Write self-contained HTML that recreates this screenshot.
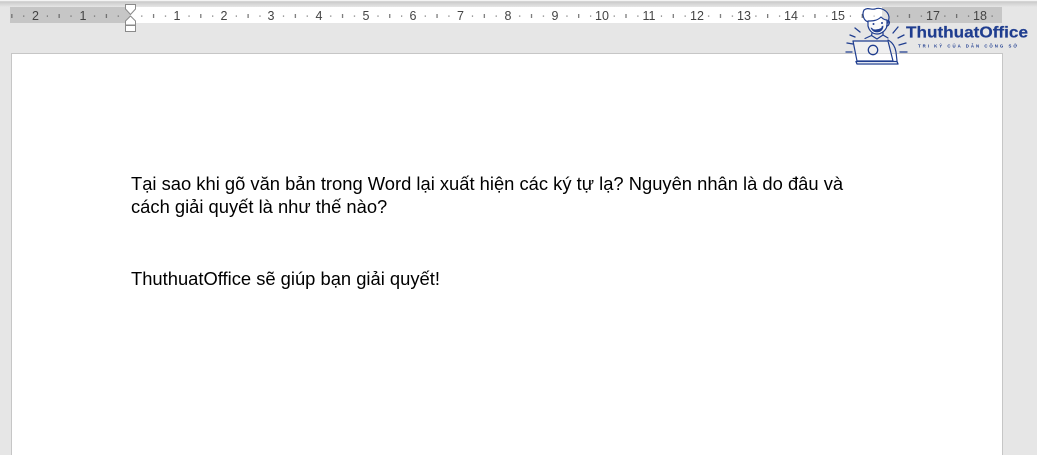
<!DOCTYPE html>
<html lang="vi">
<head>
<meta charset="utf-8">
<title>ThuthuatOffice</title>
<style>
html,body{margin:0;padding:0;background:#e6e6e6;width:1037px;height:455px;overflow:hidden;}
body{position:relative;font-family:"Liberation Sans",sans-serif;}
#top{position:absolute;left:0;top:0;width:1037px;height:7px;background:linear-gradient(#f4f4f4 0,#f4f4f4 1px,#c9c9c9 1.5px,#d6d6d6 4px,#e6e6e6 7px);}
#page{position:absolute;left:11px;top:53px;width:990px;height:401px;background:#fff;border:1px solid #c6c6c6;border-bottom:0;}
.t{position:absolute;left:131px;font-size:18.36px;line-height:23px;color:#000;white-space:nowrap;}
svg{position:absolute;left:0;top:0;}
</style>
</head>
<body>
<div id="top"></div>
<div id="page"></div>
<div class="t" style="top:172px">Tại sao khi gõ văn bản trong Word lại xuất hiện các ký tự lạ? Nguyên nhân là do đâu và</div>
<div class="t" style="top:195px">cách giải quyết là như thế nào?</div>
<div class="t" style="top:267px">ThuthuatOffice sẽ giúp bạn giải quyết!</div>

<svg width="1037" height="455" viewBox="0 0 1037 455" xmlns="http://www.w3.org/2000/svg">
<defs>
<pattern id="tk" x="130" y="7" width="47.24" height="16" patternUnits="userSpaceOnUse">
<rect x="11.3" y="8.5" width="1" height="1.2" fill="#555"/>
<rect x="23.1" y="7" width="1" height="4" fill="#555"/>
<rect x="35" y="8.5" width="1" height="1.2" fill="#555"/>
</pattern>
</defs>
<rect x="10" y="7" width="992" height="16" fill="#c6c6c6"/>
<rect x="130" y="7" width="752" height="16" fill="#fff"/>
<rect x="10" y="7" width="992" height="16" fill="url(#tk)"/>
<g font-family="Liberation Sans, sans-serif" font-size="12.5" fill="#444" text-anchor="middle">
<text x="35.5" y="20">2</text><text x="83" y="20">1</text>
<text x="177" y="20">1</text><text x="224" y="20">2</text><text x="271" y="20">3</text>
<text x="319" y="20">4</text><text x="366" y="20">5</text><text x="413" y="20">6</text>
<text x="460.5" y="20">7</text><text x="508" y="20">8</text><text x="555" y="20">9</text>
<text x="602" y="20">10</text><text x="649" y="20">11</text><text x="697" y="20">12</text>
<text x="744" y="20">13</text><text x="791" y="20">14</text><text x="838" y="20">15</text>
<text x="933" y="20">17</text><text x="980" y="20">18</text>
</g>
<!-- indent markers -->
<path d="M125.5 4.5H135.5V9L130.5 14.5L125.5 9Z" fill="#fff" stroke="#8a8a8a"/>
<path d="M130.5 16L135.5 21V25H125.5V21Z" fill="#fff" stroke="#8a8a8a"/>
<rect x="125.5" y="25.5" width="10" height="6" fill="#fff" stroke="#8a8a8a"/>
<!-- mascot -->
<g fill="none" stroke="#1f3d8f" stroke-width="1.2" stroke-linecap="round" stroke-linejoin="round">
<path d="M868 22C863 20 862 14 864 10C868 7 871 10 875 9C880 7 888 10 889 17C889 19 888.500 21 888 23" fill="#fff" fill-opacity=".45"/>
<path d="M868 21C872 21 877 21 881 17C883 19 885 20 887 20L887 26C886 30 882 34 877 34C872 34 869 30 868 26Z" fill="#fff" fill-opacity=".7"/>
<path d="M887 21C889 20 890 22 889 24C888.500 25.500 887.500 26 886.500 26"/>
<path d="M871 28C874 30 880 29 883 26C883 30 880 32 877 32C874 32 872 30 871 28Z" fill="#1f3d8f" stroke-width=".8"/>
<path d="M873 28.700C875 29.300 878 29 881 27.500" stroke="#fff" stroke-width="1"/>
<circle cx="873.500" cy="24" r="1" fill="#1f3d8f" stroke="none"/>
<circle cx="882" cy="23" r="1" fill="#1f3d8f" stroke="none"/>
<path d="M872 33L871.500 35.500L865 38.500M883 32L883 35L888 38"/>
<path d="M871.500 35.500L877 39L883 35"/>
<path d="M853 41H888L893 61H857Z" fill="#fff" fill-opacity=".35"/>
<path d="M888 40C892 42 895 46 896 52L897 61"/>
<circle cx="873" cy="50" r="4.700" stroke-width="1.300"/>
<path d="M856 61.500L897 61.500L898 64H857Z" fill="#fff" stroke-width="1.300"/>
<path d="M855 28L860 32M850 35L855 37M847 43L853 44M846 52H852M893 33L898 27M898 38L904 35M899 45L906 43M900 52H907" stroke-width="1.300"/>
</g>
<text x="906" y="37.500" font-family="Liberation Sans, sans-serif" font-weight="700" font-size="15.600" fill="#1f3d8f" stroke="#1f3d8f" stroke-width=".2" textLength="122" lengthAdjust="spacingAndGlyphs">ThuthuatOffice</text>
<text x="918" y="47.500" font-family="Liberation Sans, sans-serif" font-weight="700" font-size="4.300" fill="#1f3d8f" textLength="99" lengthAdjust="spacing">TRI KỶ CỦA DÂN CÔNG SỞ</text>
</svg>
</body>
</html>
